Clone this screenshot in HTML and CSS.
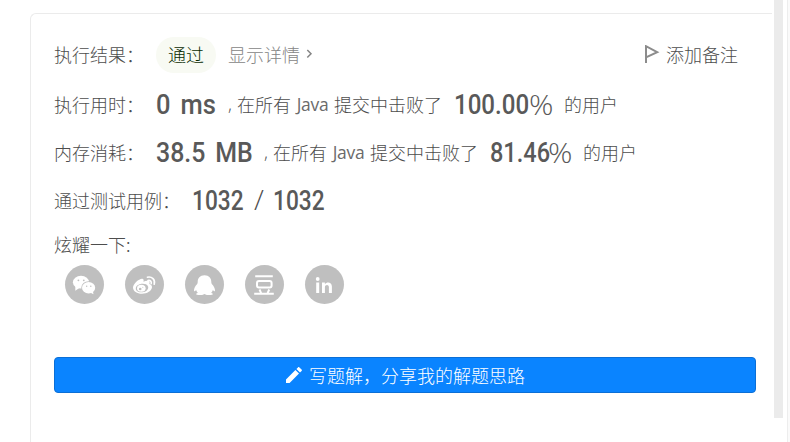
FILE: index.html
```html
<!DOCTYPE html>
<html lang="zh-CN">
<head>
<meta charset="utf-8">
<title>执行结果</title>
<link rel="stylesheet" href="styles.css">
</head>
<body>
<div class="page">
  <main class="card">
    <div class="row row-result">
      <span class="label">执行结果：</span>
      <span class="badge">通过</span>
      <a class="details">显示详情<svg width="7" height="10" viewBox="0 0 7 10"><path d="M1.3 1 5 4.8 1.3 8.6" fill="none" stroke="currentColor" stroke-width="1.5"/></svg></a>
      <a class="note"><svg width="16" height="18" viewBox="0 0 16 18"><path d="M2 18V1.2L13.2 7.2 2 12.3" fill="none" stroke="#8c8c8c" stroke-width="2"/></svg>添加备注</a>
    </div>
    <div class="row">
      <span class="label">执行用时：</span>
      <span class="num time">0 ms</span>
      <span class="text"><span class="comma">,</span>在所有<span class="lang">Java</span>提交中击败了</span>
      <span class="rate"><span class="num rate-time">100.00</span><span class="pct">%</span></span>
      <span class="text">的用户</span>
    </div>
    <div class="row">
      <span class="label">内存消耗：</span>
      <span class="num memory">38.5 MB</span>
      <span class="text"><span class="comma">,</span>在所有<span class="lang">Java</span>提交中击败了</span>
      <span class="rate"><span class="num rate-memory">81.46</span><span class="pct">%</span></span>
      <span class="text">的用户</span>
    </div>
    <div class="row">
      <span class="label label-cases">通过测试用例：</span>
      <span class="num cases">1032</span>
      <span class="slash">/</span>
      <span class="num cases">1032</span>
    </div>
    <div class="share-title">炫耀一下:</div>
    <div class="share">
      <a class="social"><svg viewBox="0 0 39 39"><g fill="#fff"><ellipse cx="16" cy="17.2" rx="8.1" ry="6.4"/><path d="M10.3 21v4.8l4-2.7z"/></g><ellipse cx="23.6" cy="22.7" rx="7.3" ry="6.5" fill="#bfbfbf"/><ellipse cx="23.6" cy="22.7" rx="6.6" ry="5.7" fill="#fff"/><path d="M25 27.5l3.5 1.7-.6-3z" fill="#fff"/><g fill="#bfbfbf"><circle cx="13.4" cy="15.3" r=".9"/><circle cx="18.8" cy="15.3" r=".9"/><circle cx="21.7" cy="21.2" r=".7"/><circle cx="25.8" cy="21.2" r=".7"/></g></svg></a>
      <a class="social"><svg viewBox="0 0 39 39"><path d="M8 22.5c0-3.8 6.7-9.6 9.5-8.8 1.5.4 1.2 2 .9 3 2.5-1 5.8-1.5 6.2.3.2.9-.2 1.5-.3 2 1.8.6 2.8 1.6 2.7 3.3-.3 3.6-5 6.5-10 6.5-4.9 0-9-2.5-9-6.3z" fill="#fff"/><ellipse cx="17" cy="23" rx="6.3" ry="4.3" fill="#bfbfbf" transform="rotate(-8 17 23)"/><ellipse cx="16.3" cy="23.2" rx="4.3" ry="3.5" fill="#fff"/><circle cx="15.2" cy="24" r="1.3" fill="#bfbfbf"/><circle cx="17.8" cy="22.3" r=".5" fill="#bfbfbf"/><g fill="none" stroke="#fff" stroke-width="1.6" stroke-linecap="round"><path d="M22.4 12.2c4.5-1 8.2 2.6 6.8 7"/><path d="M23 15.5c2.2-.5 3.8 1 3.2 3.1"/></g></svg></a>
      <a class="social"><svg viewBox="0 0 39 39"><path d="M19.5 10.2c-4.6 0-6.8 3-6.8 6.500 0 .8-.1 1.700-.5 2.300-1.900 2-3.300 4.300-3.200 6.600.1 1.300 1 .8 2.100-.7.3 1.100.9 2 1.700 2.800-1.100.5-1.900 1-1.700 1.600.5 1.200 6.400 1 8.400-.4 2 1.400 7.900 1.600 8.400.4.2-.6-.6-1.100-1.700-1.600.8-.8 1.400-1.700 1.700-2.800 1.100 1.500 2 2 2.100.7.1-2.300-1.300-4.600-3.200-6.600-.4-.6-.5-1.500-.5-2.300 0-3.500-2.200-6.500-6.800-6.500z" fill="#fff"/></svg></a>
      <a class="social"><svg viewBox="0 0 39 39"><g fill="none" stroke="#fff" stroke-width="2"><path d="M10.2 11.3h17.6M9.2 28.7h19.6"/><rect x="12" y="16" width="14.6" height="6.5" rx="2"/><path d="M14.5 24.5l1.6 3.6M24.2 24.5l-1.6 3.6"/></g></svg></a>
      <a class="social"><svg viewBox="0 0 39 39"><g fill="#fff"><circle cx="12.7" cy="14" r="1.9"/><path d="M11.2 17.6h3v10.5h-3zM17 17.6h2.9v1.5c2-2.7 7-2.2 7 2.500v6.500h-3v-6c0-3-4-2.600-4 0v6H17z"/></g></svg></a>
    </div>
    <button class="write"><svg width="18" height="18" viewBox="0 0 18 18"><path d="M1 13.4V17h3.6L14 7.6 10.4 4zM11.4 3l3.6 3.6 1.6-1.6c.5-.5.5-1 0-1.4l-2.2-2.2c-.5-.5-1-.5-1.4 0z" fill="#fff"/></svg>写题解，分享我的解题思路</button>
  </main>
  <div class="scrollbar"></div>
  <div class="side"></div>
</div>
</body>
</html>
```

FILE: styles.css
```css
* { box-sizing: border-box; }
body {
  margin: 0;
  background: #fff;
  color: #4d4d4d;
  font: 300 18px/24px "Noto Sans CJK SC", sans-serif;
  overflow: hidden;
}
.page { display: flex; height: 442px; padding-left: 30px; }
.card {
  width: 742px;
  height: 450px;
  flex: none;
  margin-top: 13px;
  padding: 17px 15px 0 23px;
  border: 1px solid #ebebeb;
  border-right: 0;
  border-bottom: 0;
  border-radius: 6px 0 0 0;
}
.scrollbar { width: 9px; height: 418px; margin-left: 2px; background: #ebebeb; }
.side { width: 3px; margin-left: 4px; border-left: 1px solid #ededed; background: #fafafa; }
.row { display: flex; align-items: center; gap: 12px; height: 48px; white-space: nowrap; }
.row-result { height: 49px; padding-bottom: 1px; }
.row-result .label, .details, .note { padding-bottom: 2px; }
.badge {
  width: 60px;
  height: 36px;
  border-radius: 18px;
  background: #f8faf3;
  color: #092b00;
  line-height: 34px;
  text-align: center;
}
.details { display: flex; align-items: center; gap: 6px; color: #858585; }
.note { display: flex; align-items: center; gap: 6px; margin: 0 19px 0 auto; }
.text { display: flex; }
.comma { width: 9px; font-family: "Open Sans", sans-serif; }
.lang { width: 43px; color: #6b6b6b; text-align: center; font: 400 17.5px/25px "Open Sans", sans-serif; letter-spacing: -.3px; }
.num {
  padding-top: 2px;
  color: #595959;
  font: 500 28px/36px Roboto, sans-serif;
  transform-origin: left center;
}
.time { width: 60px; transform: scaleX(.91); word-spacing: 4px; }
.memory { width: 96px; transform: scaleX(.89); word-spacing: 4px; }
.rate { display: flex; align-items: center; }
.rate-time { width: 75px; transform: scaleX(.86); }
.rate-memory { width: 58px; transform: scaleX(.84); }
.label-cases { width: 126px; }
.cases { width: 51px; transform: scaleX(.81); }
.pct { width: 23px; color: #595959; font: 300 28px/36px "Open Sans", sans-serif; transform: scaleX(1.08); transform-origin: left center; }
.slash { width: 6px; font: 300 26px/36px Roboto, sans-serif; transform: translateX(-1px); }
.share-title { height: 36px; margin-top: 1px; line-height: 38px; }
.share { display: flex; gap: 21px; padding-left: 11px; margin-top: 4px; }
.social { width: 39px; height: 39px; border-radius: 50%; background: #bfbfbf; }
.social svg { display: block; }
.write {
  display: flex;
  align-items: center;
  justify-content: center;
  gap: 6px;
  width: 702px;
  height: 36px;
  margin-top: 53px;
  padding: 0 0 1px;
  border: 1px solid #0b6fd6;
  border-radius: 4px;
  background: #0a84ff;
  color: #fff;
  font: inherit;
}
```
